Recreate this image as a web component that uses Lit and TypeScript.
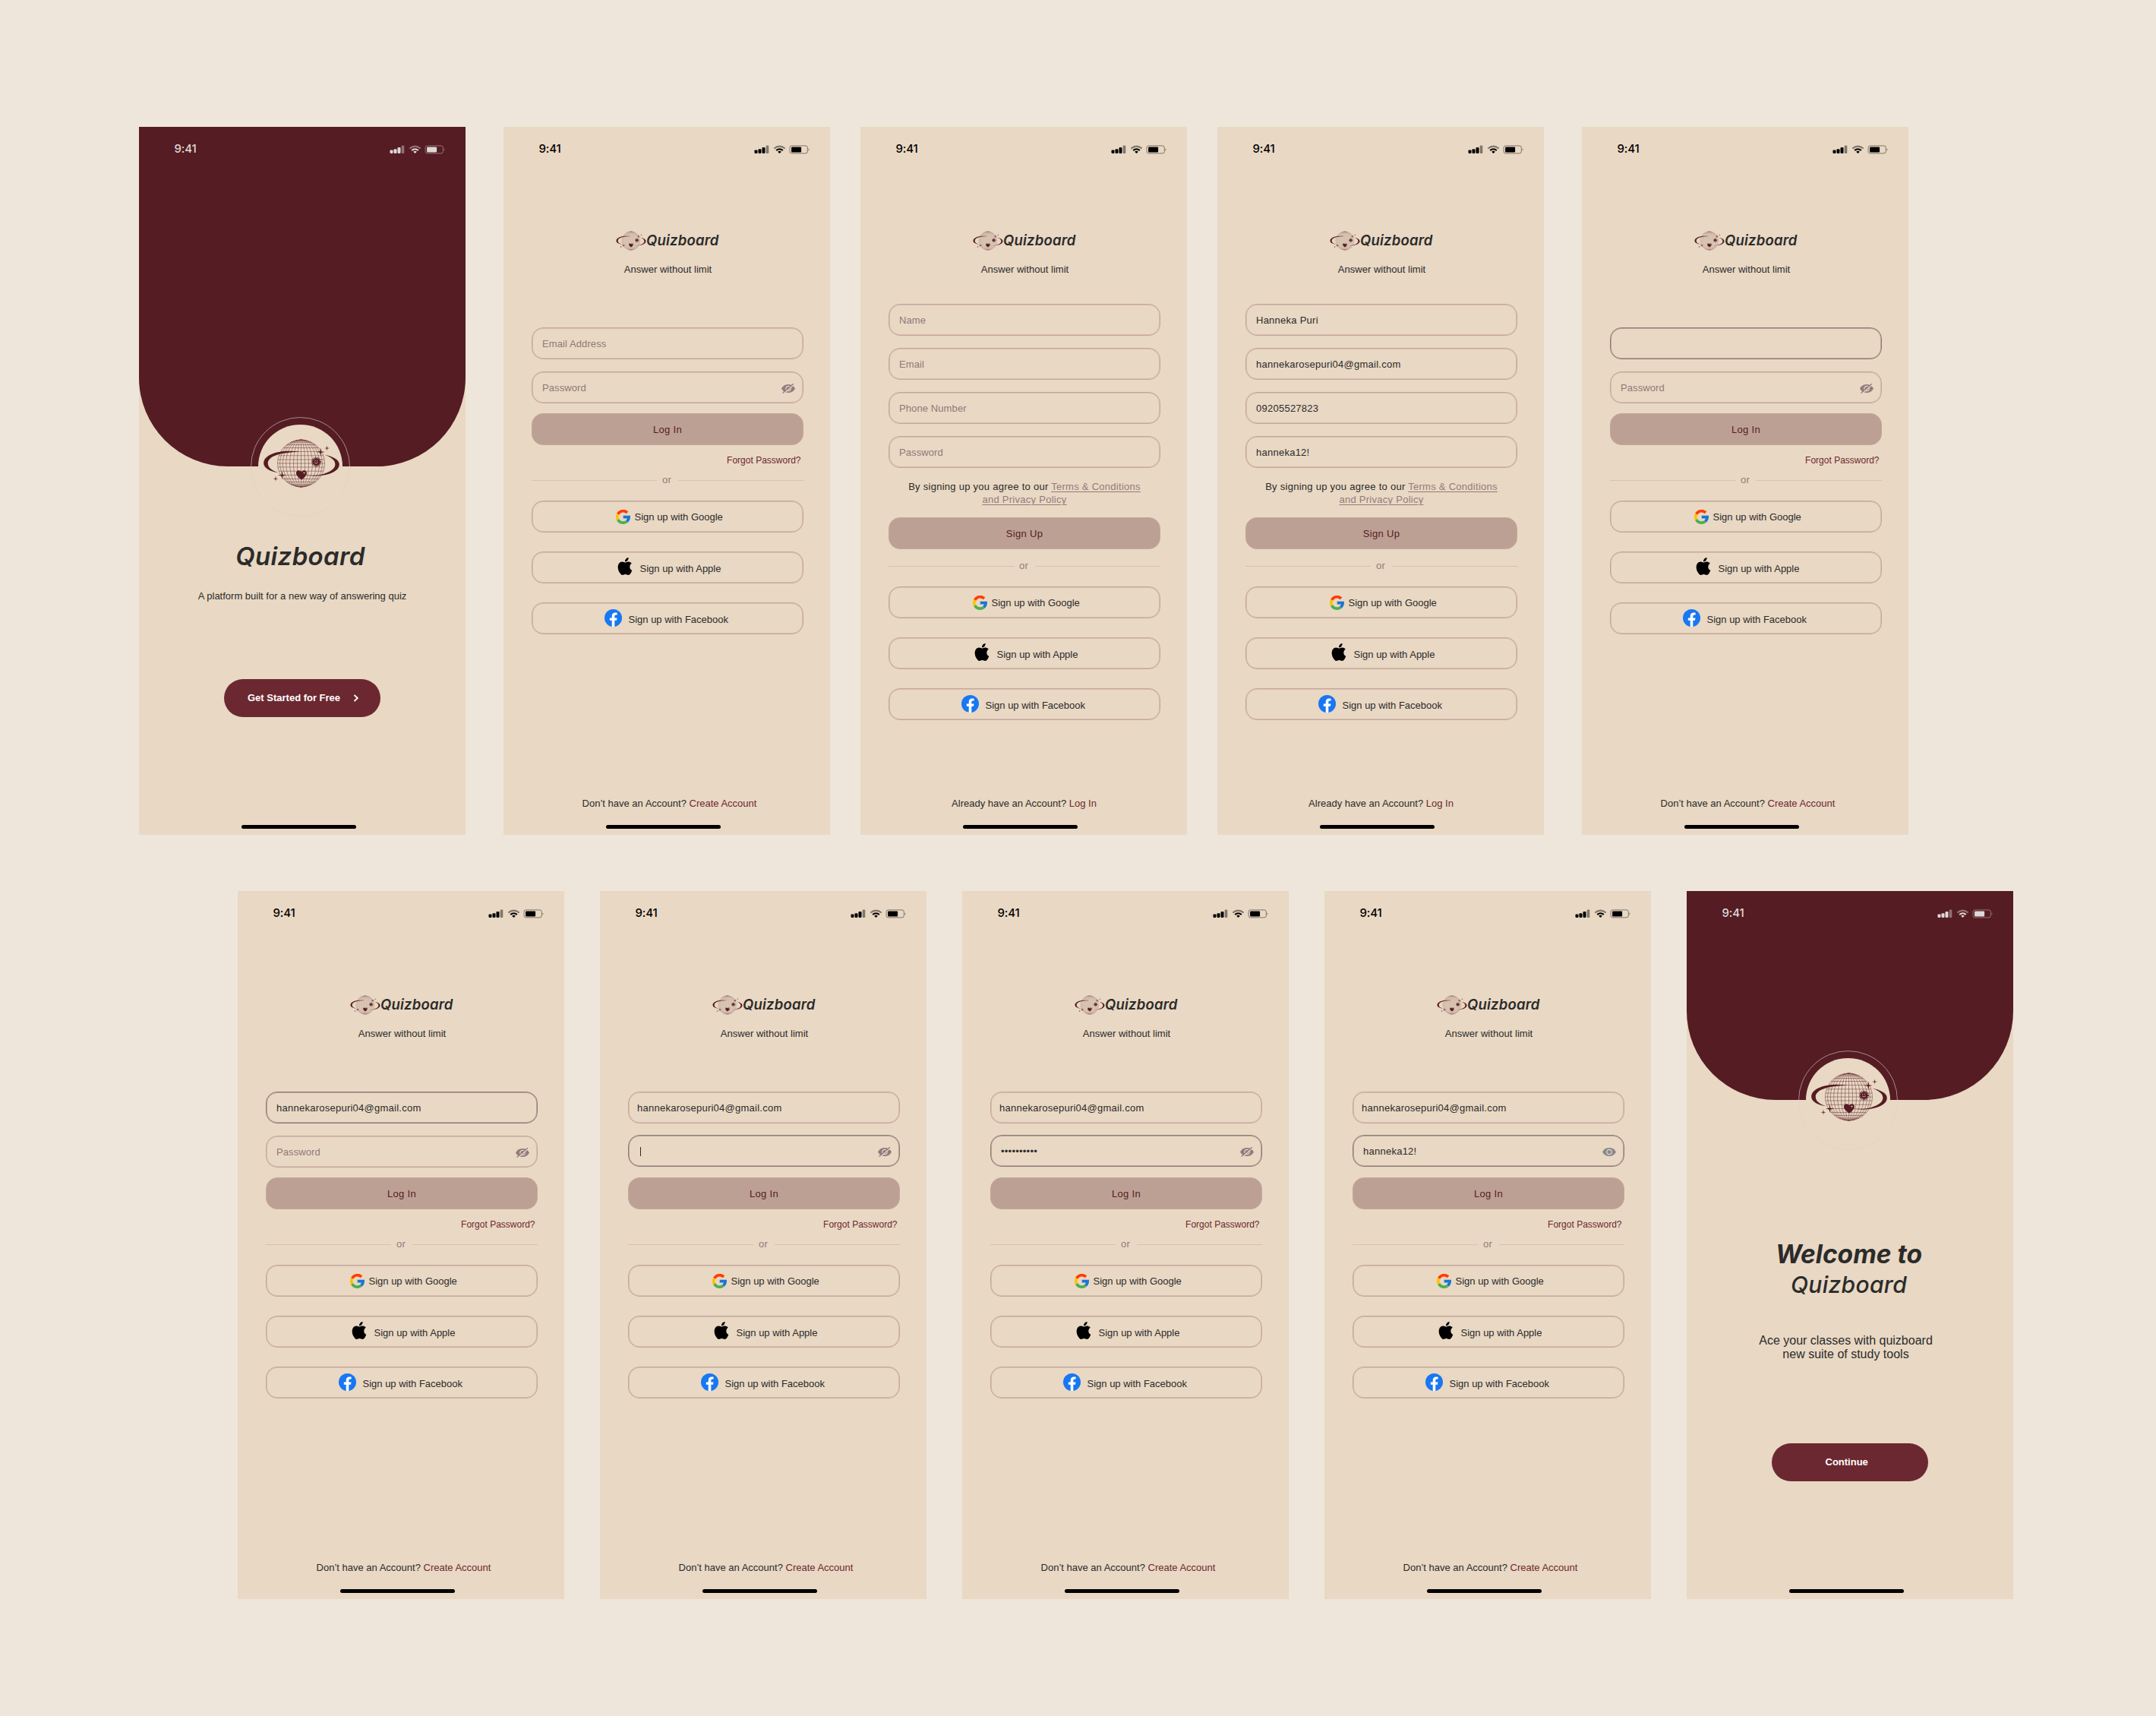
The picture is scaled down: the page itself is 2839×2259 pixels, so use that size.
import { LitElement, html, svg, css } from "lit";
import { customElement, property } from "lit/decorators.js";

@customElement("status-icons")
class StatusIcons extends LitElement {
  static styles = css`:host{display:block;height:14px} svg{display:block}`;
  render() {
    return html`<svg width="74" height="14" viewBox="-0.5 0.6 74 14" fill="currentColor">
      <rect x="0" y="7" width="4" height="4.5" rx="1.1"/><rect x="5" y="5.8" width="4" height="5.7" rx="1.1"/>
      <rect x="10" y="3.5" width="4" height="8" rx="1.1"/><rect x="15.2" y="1" width="3.6" height="10.5" rx="1" opacity=".45"/>
      <path d="M25.8 5.2Q33 -.8 40.2 5.2" fill="none" stroke="currentColor" stroke-width="2" opacity=".45"/>
      <path d="M28.6 7.6Q33 4 37.4 7.6" fill="none" stroke="currentColor" stroke-width="2"/>
      <path d="M33 11.7L30.6 9.3Q33 7.4 35.4 9.3Z"/>
      <rect x="46.6" y="1.5" width="23.2" height="10" rx="2.4" fill="none" stroke="currentColor" opacity=".45"/>
      <rect x="48.6" y="3" width="13" height="7" rx="1.2"/><path d="M71 5v3q2-1.5 0-3z" opacity=".5"/>
    </svg>`;
  }
}

const GLOBE = { cx: 76.5, cy: 80, r: 31 };
const meridians = [0.16, 0.32, 0.48, 0.64, 0.78, 0.9, 1].map(k => GLOBE.r * k);
const parallels = [-0.97, -0.9, -0.79, -0.66, -0.5, -0.33, -0.16, 0, 0.16, 0.33, 0.5, 0.66, 0.79, 0.9, 0.97];
const star = (x: number, y: number, r: number) => {
  const c = r * 0.15;
  return svg`<path d="M${x} ${y - r}L${x + c} ${y - c}L${x + r} ${y}L${x + c} ${y + c}L${x} ${y + r}L${x - c} ${y + c}L${x - r} ${y}L${x - c} ${y - c}Z"/>`;
};

@customElement("planet-mark")
class PlanetMark extends LitElement {
  static styles = css`
    :host{display:block;color:#551c23}
    svg{display:block;width:100%;height:100%}
    .grid{opacity:var(--grid-opacity,.8)}
  `;
  render() {
    const { cx, cy, r } = GLOBE;
    return html`<svg viewBox="26 48 102 64" fill="currentColor">
      <g class="grid" fill="none" stroke="currentColor" stroke-width=".55">
        <path d="M${cx} ${cy - r}v${2 * r}"/>
        ${meridians.map(rx => svg`<ellipse cx=${cx} cy=${cy} rx=${rx} ry=${r}/>`)}
        ${parallels.map(k => {
          const w = r * Math.sqrt(1 - k * k);
          return svg`<path d="M${cx - w} ${cy + k * r}h${2 * w}"/>`;
        })}
      </g>
      <path d="M75 64.8C49 61 27 68 27.2 80C27.4 86 35 90.6 46.5 92.2C37 89 32.8 85 32.8 80C32.8 71 48 65.5 75 64.8Z"/>
      <path d="M107 68.6C118 71 126.8 75 126.8 81.5C126.5 92 108 98 83 96.6C105 97 121.6 90 121.4 81C121 75.5 116 72 107 68.6Z"/>
      <path d="M77 101.8C72 98 69.8 95.4 69.9 92.6C70.2 88.6 75 88 77 91.2C79 88 83.6 88.6 84 92.6C84 95.6 81.6 98.2 77 101.8Z"/>
      <circle cx="96.5" cy="78" r="4.6"/>
      <circle cx="96.5" cy="78" r="5.2" fill="none" stroke="currentColor" stroke-width="2.4" stroke-dasharray="1.1 .95"/>
      <path d="M94.9 75.6v2M97.6 75.6v2M94 79q2.5 1.8 4.8 0" fill="none" stroke="#e9d8c3" stroke-width=".7"/>
      <g fill="#e9d8c3">${star(80.5, 92.6, 2.2)}</g>
      ${star(102.3, 65, 5.6)}${star(110.6, 60, 3.6)}${star(51.5, 95.6, 5.6)}${star(43, 100.2, 3.6)}
    </svg>`;
  }
}

const googleIcon = html`<svg class="google" viewBox="0 0 19 19"><g fill="none" stroke-width="3.7">
  <path d="M15 3.9A7.7 7.7 0 0 0 2.7 5.9" stroke="#ff3d00"/><path d="M2.7 5.9A7.7 7.7 0 0 0 2.7 13.1" stroke="#ffc107"/>
  <path d="M2.7 13.1A7.7 7.7 0 0 0 14.5 15.3" stroke="#4caf50"/><path d="M14.5 15.3A7.6 7.6 0 0 0 17.1 9.7H9.7" stroke="#1976d2"/></g></svg>`;
const appleIcon = html`<svg class="apple" viewBox="2.2 0 19.6 24"><path d="M12.15 6.9c-.95 0-2.42-1.08-3.96-1.04-2.04.03-3.91 1.18-4.96 3.01-2.12 3.68-.55 9.1 1.52 12.09 1.01 1.45 2.21 3.09 3.79 3.04 1.52-.07 2.09-.99 3.94-.99 1.83 0 2.35.99 3.96.95 1.64-.03 2.68-1.48 3.68-2.95 1.16-1.69 1.64-3.33 1.66-3.42-.04-.01-3.18-1.22-3.22-4.86-.03-3.04 2.48-4.49 2.6-4.56-1.43-2.09-3.62-2.32-4.39-2.38-2-.16-3.68 1.09-4.61 1.09zM15.53 3.83c.84-1.01 1.4-2.43 1.25-3.83-1.21.05-2.66.81-3.53 1.82-.78.9-1.46 2.34-1.27 3.71 1.34.1 2.72-.69 3.56-1.7z"/></svg>`;
const facebookIcon = html`<svg class="facebook" viewBox="0 0 24 24"><circle cx="12" cy="12" r="12" fill="#1877f2"/><path fill="#fff" d="M16.67 15.47l.53-3.47h-3.33V9.75c0-.95.47-1.87 1.96-1.87h1.51V4.92s-1.37-.23-2.68-.23c-2.74 0-4.53 1.66-4.53 4.67V12H7.08v3.47h3.05V24h3.75v-8.53z"/></svg>`;
const eyeIcon = (off: boolean) => html`<svg class="eye ${off ? "" : "on"}" viewBox="0 0 18 13"><path fill="currentColor" d="M0 6.5C2 2.8 5.2 1 9 1s7 1.8 9 5.5C16 10.2 12.8 12 9 12S2 10.2 0 6.5Z"/>
  <circle cx="9" cy="6.5" r="3.2" fill="none" stroke="#e9d8c3" stroke-width="1.2"/>
  ${off ? svg`<path d="M2.6 13.4L16.6 1" stroke="#e9d8c3" stroke-width="1.5"/><path d="M1.6 12.6L15.8 .2" stroke="currentColor" stroke-width="1.3"/>` : ""}</svg>`;

interface Field { label?: string; value?: string; active?: boolean; eye?: "off" | "on"; caret?: boolean; tight?: boolean; raised?: boolean }
interface Screen { kind: "login" | "signup" | "start" | "welcome"; fields?: Field[] }

@customElement("phone-screen")
class PhoneScreen extends LitElement {
  @property({ attribute: false }) screen!: Screen;

  static styles = css`
    :host{display:block;width:430px;height:932px;flex:none}
    *{box-sizing:border-box}
    .phone{width:430px;height:932px;background:#e9d8c3;display:flex;flex-direction:column;color:#2b2b2b;font:13px/16px "Liberation Sans",Arial,sans-serif;white-space:nowrap}
    .status{display:flex;justify-content:space-between;align-items:flex-start;height:60px;padding:20px 26px 0 46.5px;color:#000;flex:none}
    .time{font:550 15px/18px Inter,"Liberation Sans",sans-serif;letter-spacing:-.15px}
    status-icons{margin-top:4px}
    .brand{display:flex;height:26px;margin:77px 0 0 147px;flex:none}
    .brand planet-mark{width:40px;height:26px;margin:0 -.5px 0 .5px;--grid-opacity:.55}
    .name{font:italic 600 18.5px/24px Inter,"Liberation Sans",sans-serif;color:#2b2b2b}
    .brand .name{margin-left:1px;letter-spacing:.2px}
    .tag{margin:16px 0 0 3px;text-align:center;height:18px;line-height:18px;letter-spacing:.03px;flex:none}
    .form{width:358px;margin:0 0 0 37px;display:flex;flex-direction:column;flex:none}
    .login .form{margin-top:67px}
    .signup .form{margin-top:36px}
    .field,.social{height:42px;border:1px solid #c4a79b;border-radius:15px;box-shadow:inset 0 0 0 1px #c4a79b88;display:flex;align-items:center}
    .field{margin-bottom:16px;padding:1px 10px 0 13px;justify-content:space-between;color:#8f787a;letter-spacing:.1px}
    .field.filled{color:#2b2b2b;letter-spacing:.25px}
    .field.active{border-color:#8f7a76;box-shadow:inset 0 0 0 1px #8f7a7688}
    .field.tight{padding-left:11px}
    .field.raised{margin-top:-1px;margin-bottom:17px}
    .caret{width:1px;height:12px;background:#2b2b2b;margin-left:1.5px}
    .eye{width:18px;height:13px;margin-top:1px;overflow:visible;color:#937b7d}
    .eye.on{color:#868a8d}
    .primary{height:42px;border-radius:15px;background:#bda094;border:1px solid #c4a79b;color:#551c23;display:flex;align-items:center;justify-content:center;letter-spacing:.35px;padding-top:2px}
    .login .primary{margin-top:-3px}
    .forgot{color:#6c2830;text-align:right;padding-right:3.5px;font-size:12px;line-height:16px;margin-top:12px;height:16px}
    .terms{text-align:center;line-height:17px;letter-spacing:.27px;margin:0 0 15px;height:34px}
    .terms u{color:#937b7d;text-underline-offset:2px}
    .or{display:flex;align-items:center;height:16px;color:#937b7d;gap:7px;margin-top:10px;letter-spacing:.1px}
    .or i{flex:1;height:1px;background:#d8c1b1}
    .signup .or{margin-top:14px}
    .signup .or + .social{margin-top:19px}
    .or b{font-weight:400;width:14px;text-align:center;text-indent:-2px}
    .social{margin-bottom:25px}
    .or + .social{margin-top:19px}
    .social svg{display:block;flex:none}
    .social.g{padding:1px 0 0 110px}.social.a{padding:3px 0 0 111.5px}.social.f{padding:3px 0 0 95px}
    .google{width:19px;height:19px;margin-right:5.5px}
    .apple{width:20px;height:23px;margin:-6px 10px 0 0}
    .facebook{width:23px;height:23px;margin:-5px 8.5px 0 0}
    .foot{margin-top:auto;height:18px;line-height:18px;text-align:center;padding-left:7px;flex:none}
    .signup .foot{padding-left:1px}
    .foot em{font-style:normal;color:#6c2830}
    .home{width:151px;height:5px;border-radius:3px;background:#000;margin:19px 0 8px 135px;flex:none}
    .hero{background:#551c23;border-radius:0 0 117px 117px;flex:none;display:flex;flex-direction:column;justify-content:space-between;align-items:center}
    .start .hero{height:447px}.welcome .hero{height:275px}
    .hero .status{width:100%;color:#ded9d8}
    .badge{width:111px;height:55px;background:#e9d8c3;border-radius:56px 56px 0 0;position:relative;margin-right:5px}
    .ring{position:absolute;left:-10px;top:-10px;width:131px;height:131px;border:1px solid #dcd3cb99;border-radius:50%}
    .badge planet-mark{position:absolute;left:6px;top:19px;width:102px;height:64px}
    .title{text-align:center;flex:none}
    .start .title{margin:98px 5px 0 0;font-size:33px;line-height:40px;letter-spacing:.35px}
    .welcome .title{margin:184px 3px 0 0;line-height:39px;font-size:30px;font-weight:500;letter-spacing:.3px}
    .welcome .big{font-size:33.5px;font-weight:700;letter-spacing:0}
    .blurb{text-align:center;flex:none}
    .start .blurb{margin-top:25px}
    .welcome .blurb{font-size:16px;line-height:18px;margin:45px 11px 0 0}
    .cta{width:206px;height:50px;border-radius:25px;background:#6c2830;color:#fff;font-weight:700;display:flex;align-items:center;margin-left:112px;flex:none}
    .start .cta{margin-top:101px;padding-left:31px}
    .welcome .cta{margin-top:108px;padding-left:70.5px}
    .cta svg{margin-left:17px}
    .push{margin-top:auto}
  `;

  private status() { return html`<div class="status"><span class="time">9:41</span><status-icons></status-icons></div>`; }

  private hero() {
    return html`<div class="hero">${this.status()}<div class="badge"><div class="ring"></div><planet-mark></planet-mark></div></div>`;
  }

  private field(f: Field) {
    return html`<div class="field ${f.value ? "filled" : ""} ${f.active ? "active" : ""} ${f.tight ? "tight" : ""} ${f.raised ? "raised" : ""}">
      ${f.caret ? html`<span class="caret"></span>` : html`<span class="text">${f.value ?? f.label ?? ""}</span>`}${f.eye ? eyeIcon(f.eye === "off") : ""}</div>`;
  }

  render() {
    const { kind, fields = [] } = this.screen;
    if (kind === "start") return html`<div class="phone start">${this.hero()}
      <div class="name title">Quizboard</div><div class="blurb">A platform built for a new way of answering quiz</div>
      <div class="cta">Get Started for Free<svg width="8" height="10" viewBox="0 0 8 10"><path d="M1.5 1L5.8 5L1.5 9" fill="none" stroke="#fff" stroke-width="1.8"/></svg></div>
      <div class="push"></div><div class="home"></div></div>`;
    if (kind === "welcome") return html`<div class="phone welcome">${this.hero()}
      <div class="name title"><span class="big">Welcome to</span><br>Quizboard</div>
      <div class="blurb">Ace your classes with quizboard<br>new suite of study tools</div>
      <div class="cta">Continue</div><div class="push"></div><div class="home"></div></div>`;
    const login = kind === "login";
    return html`<div class="phone ${kind}">${this.status()}
      <div class="brand"><planet-mark></planet-mark><span class="name">Quizboard</span></div>
      <div class="tag">Answer without limit</div>
      <div class="form">
        ${fields.map(f => this.field(f))}
        ${login ? "" : html`<div class="terms">By signing up you agree to our <u>Terms &amp; Conditions</u><br><u>and Privacy Policy</u></div>`}
        <div class="primary">${login ? "Log In" : "Sign Up"}</div>
        ${login ? html`<div class="forgot">Forgot Password?</div>` : ""}
        <div class="or"><i></i><b>or</b><i></i></div>
        <div class="social g">${googleIcon}<span>Sign up with Google</span></div>
        <div class="social a">${appleIcon}<span>Sign up with Apple</span></div>
        <div class="social f">${facebookIcon}<span>Sign up with Facebook</span></div>
      </div>
      <div class="foot">${login ? html`Don’t have an Account? <em>Create Account</em>` : html`Already have an Account? <em>Log In</em>`}</div>
      <div class="home"></div></div>`;
  }
}

const MAIL = "hannekarosepuri04@gmail.com";
const topRow: Screen[] = [
  { kind: "start" },
  { kind: "login", fields: [{ label: "Email Address" }, { label: "Password", eye: "off" }] },
  { kind: "signup", fields: [{ label: "Name" }, { label: "Email" }, { label: "Phone Number" }, { label: "Password" }] },
  { kind: "signup", fields: [{ value: "Hanneka Puri" }, { value: MAIL }, { value: "09205527823" }, { value: "hanneka12!" }] },
  { kind: "login", fields: [{ active: true }, { label: "Password", eye: "off" }] },
];
const bottomRow: Screen[] = [
  { kind: "login", fields: [{ value: MAIL, active: true }, { label: "Password", eye: "off" }] },
  { kind: "login", fields: [{ value: MAIL, tight: true }, { caret: true, active: true, raised: true, eye: "off" }] },
  { kind: "login", fields: [{ value: MAIL, tight: true }, { value: "••••••••••", active: true, raised: true, eye: "off" }] },
  { kind: "login", fields: [{ value: MAIL, tight: true }, { value: "hanneka12!", active: true, raised: true, eye: "on" }] },
  { kind: "welcome" },
];

@customElement("app-root")
class AppRoot extends LitElement {
  static styles = css`
    :host{display:block;width:2839px;height:2259px;background:#eee6db;overflow:hidden}
    .board{display:flex;flex-direction:column;gap:74px;padding-top:167px}
    .row{display:grid}
    .top{grid-template-columns:480px 470px 470px 480px 430px;padding-left:183px}
    .bottom{grid-template-columns:repeat(4,477px) 430px;padding-left:313px}
  `;
  render() {
    return html`<div class="board">
      <div class="row top">${topRow.map(s => html`<phone-screen .screen=${s}></phone-screen>`)}</div>
      <div class="row bottom">${bottomRow.map(s => html`<phone-screen .screen=${s}></phone-screen>`)}</div>
    </div>`;
  }
}
